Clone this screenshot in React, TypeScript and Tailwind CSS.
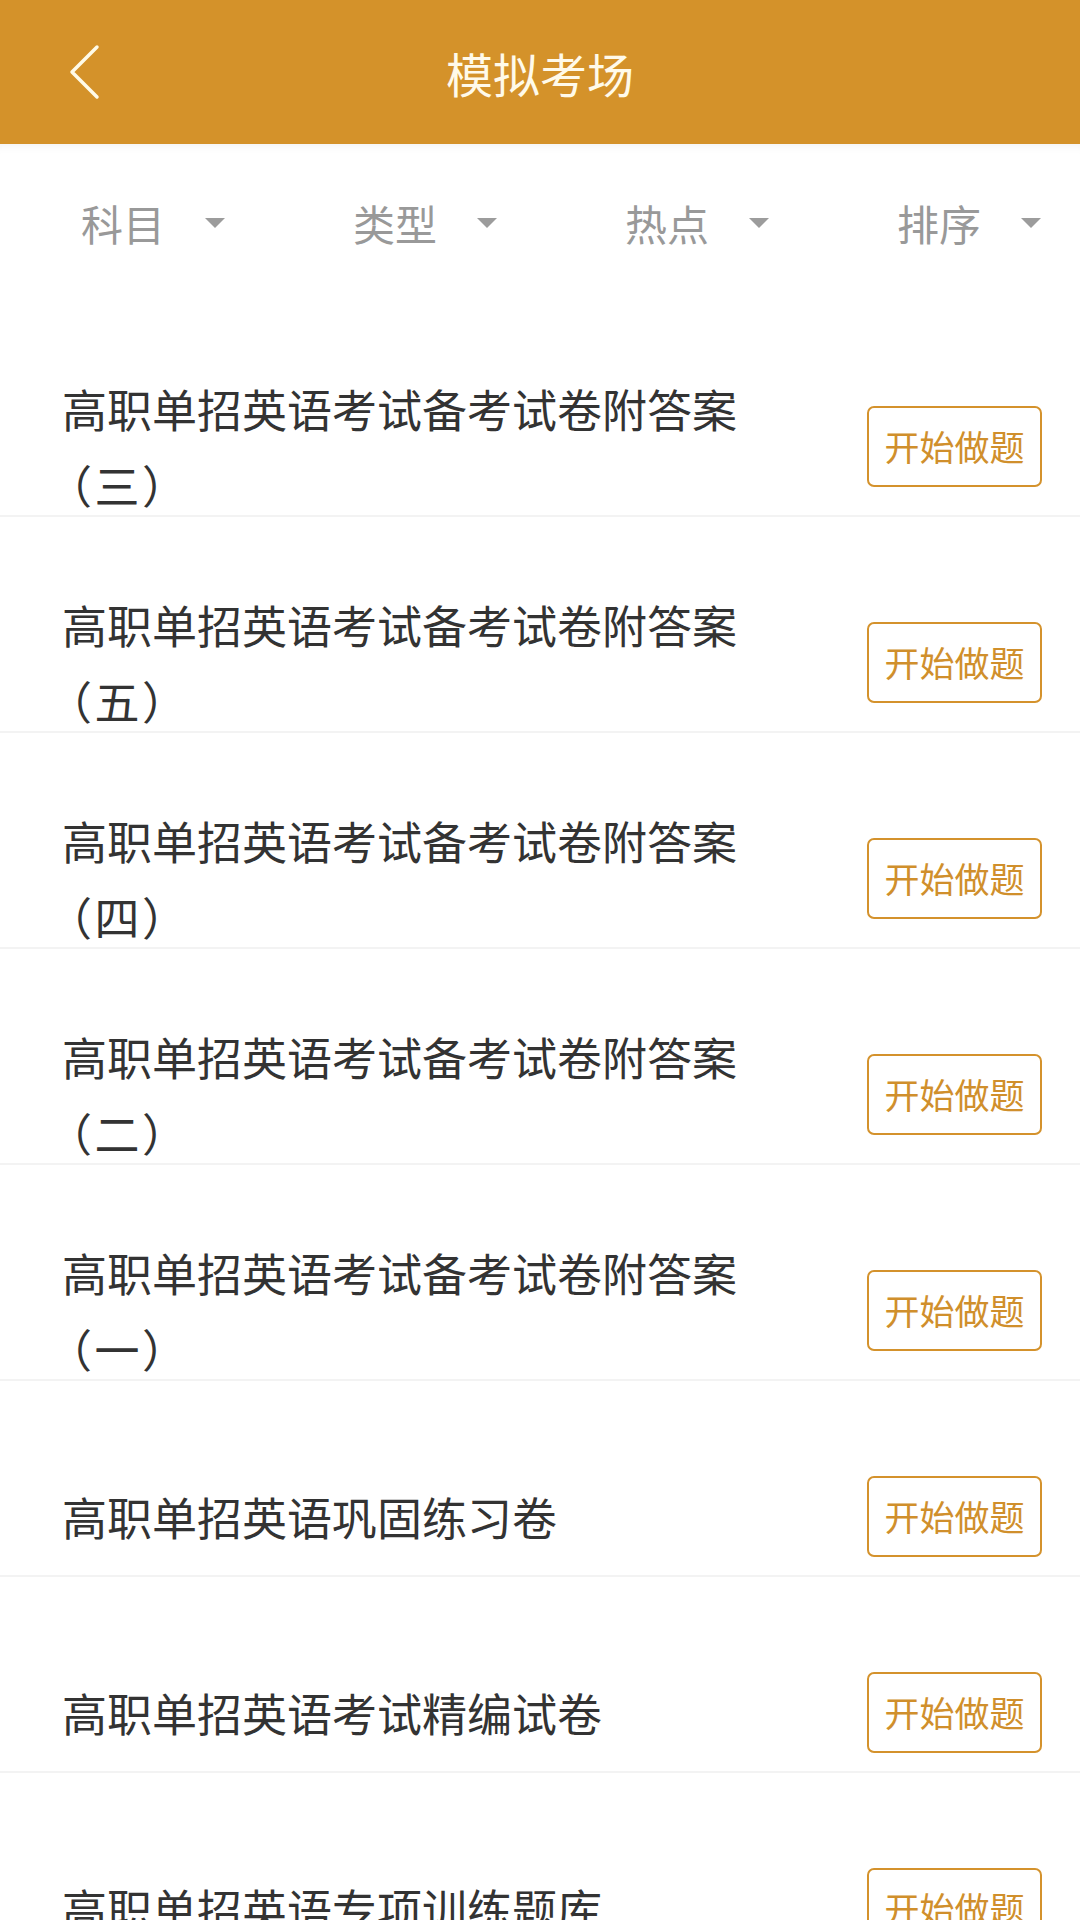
import React from 'react';

const filters = ['科目', '类型', '热点', '排序'];

type Paper = { title: string; suffix?: string };

const papers: Paper[] = [
  { title: '高职单招英语考试备考试卷附答案', suffix: '（三）' },
  { title: '高职单招英语考试备考试卷附答案', suffix: '（五）' },
  { title: '高职单招英语考试备考试卷附答案', suffix: '（四）' },
  { title: '高职单招英语考试备考试卷附答案', suffix: '（二）' },
  { title: '高职单招英语考试备考试卷附答案', suffix: '（一）' },
  { title: '高职单招英语巩固练习卷' },
  { title: '高职单招英语考试精编试卷' },
  { title: '高职单招英语专项训练题库' },
];

const font = { fontFamily: '"Noto Sans CJK SC", "Noto Sans", sans-serif' };

function Caret() {
  return (
    <svg width="20" height="10" viewBox="0 0 20 10" className="shrink-0">
      <path d="M0 0 L20 0 L10 10 Z" fill="#9c9c9c" />
    </svg>
  );
}

function PaperRow({ paper }: { paper: Paper }) {
  const twoLine = !!paper.suffix;
  return (
    <div
      className={
        'flex items-center justify-between border-b-2 border-[#f3f3f3] pl-[62px] pr-[38px] pt-[77px] ' +
        (twoLine ? 'h-[216px]' : 'h-[196px]')
      }
    >
      <div className="text-[45px] leading-[76px] text-[#333333]">
        <div className="whitespace-nowrap">{paper.title}</div>
        {paper.suffix && (
          <div className="whitespace-nowrap pl-[6px] tracking-[4px] [font-feature-settings:'palt']">
            {paper.suffix}
          </div>
        )}
      </div>
      <button
        type="button"
        className="flex h-[81px] w-[175px] shrink-0 items-center justify-center rounded-[7px] border-2 border-[#d4922c] text-[35px] text-[#d08f2c]"
      >
        开始做题
      </button>
    </div>
  );
}

export default function App() {
  return (
    <main className="h-[1920px] w-[1080px] overflow-hidden bg-white" style={font}>
      <header className="relative flex h-[144px] items-center justify-center bg-[#d4922a]">
        <svg
          width="40"
          height="60"
          viewBox="0 0 40 60"
          className="absolute left-[64px] top-[42px]"
        >
          <path d="M33 5 L8 30 L33 55" fill="none" stroke="#fffbe8" strokeWidth="3.5" strokeLinecap="round" strokeLinejoin="round" />
        </svg>
        <h1 className="text-[47px] font-normal leading-none text-[#fffaea]">模拟考场</h1>
      </header>

      <nav className="flex h-[157px] items-center pl-[81px] shadow-[inset_0_10px_10px_-8px_rgba(0,0,0,0.05)]">
        {filters.map((f) => (
          <div key={f} className="flex w-[272px] shrink-0 items-center gap-[40px]">
            <span className="text-[42px] leading-none text-[#999999]">{f}</span>
            <Caret />
          </div>
        ))}
      </nav>

      <section>
        {papers.map((p, i) => (
          <PaperRow key={i} paper={p} />
        ))}
      </section>
    </main>
  );
}
